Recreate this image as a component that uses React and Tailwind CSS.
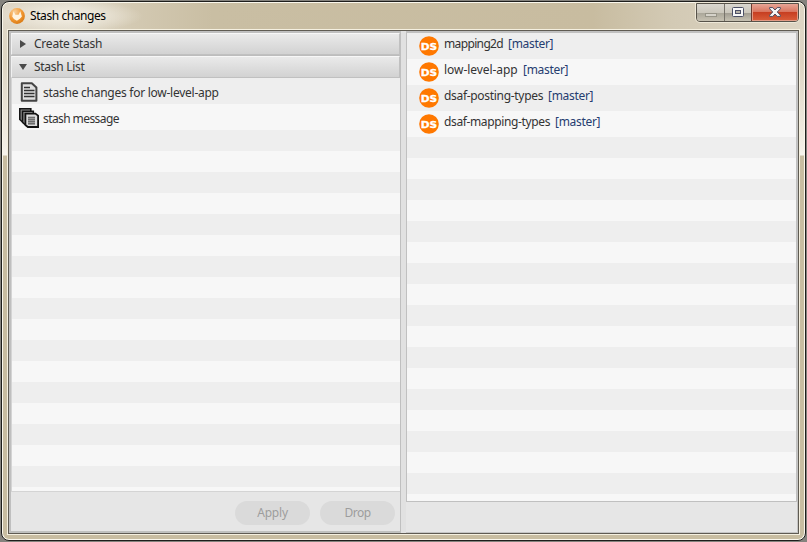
import React from 'react';

const stripes = 'bg-[repeating-linear-gradient(to_bottom,#eeeeee_0px,#eeeeee_21px,#f7f7f7_21px,#f7f7f7_42px)]';

function Logo() {
  return (
    <svg width="18" height="18" viewBox="0 0 18 18">
      <defs>
        <radialGradient id="orb" cx="35%" cy="25%" r="80%">
          <stop offset="0" stopColor="#f9d09a" />
          <stop offset=".55" stopColor="#f39a35" />
          <stop offset="1" stopColor="#d97912" />
        </radialGradient>
      </defs>
      <circle cx="9" cy="9" r="7.9" fill="url(#orb)" />
      <path d="M4.2 9.5 5.6 4.3l1.8 3.4h3.2l1.7-3.4 1.6 5.2-2 2.3-3 2-3-1.8z" fill="#fff4df" />
    </svg>
  );
}

function DocIcon() {
  return (
    <svg width="20" height="20" viewBox="0 0 20 20" className="mt-[2px] shrink-0">
      <path d="M2.8 1.2h10L17.4 5.5V18.7H2.8z" fill="#e0e0e0" stroke="#444" strokeWidth="2" strokeLinejoin="round" />
      <path d="M5 5.5h6M5 8.5h10.5M5 11.5h10.5M5 14.5h10.5" stroke="#333" strokeWidth="1.6" />
    </svg>
  );
}

function StackIcon() {
  return (
    <svg width="20" height="20" viewBox="0 0 20 20" className="mt-[2px] shrink-0">
      <path d="M.8.8h11v12.7H3L.8 11.5z" fill="#8a8a8a" stroke="#151515" strokeWidth="1.6" />
      <path d="M3.6 3.3h10.7v13H5.7l-2.1-2z" fill="#999" stroke="#151515" strokeWidth="1.6" />
      <path d="M6.4 5.6h10l2.7 2V19H8.9l-2.5-2z" fill="#dcdcdc" stroke="#111" strokeWidth="1.8" />
      <path d="M9 8.5h7v8.5H9z" fill="#999" />
      <path d="M9 9.5h7M9 11.5h7M9 13.5h7M9 15.5h7" stroke="#6d6d6d" />
    </svg>
  );
}

function Badge() {
  return (
    <svg width="20" height="20" viewBox="0 0 20 20" className="shrink-0">
      <circle cx="10" cy="10" r="9.8" fill="#ff7800" />
      <g transform="translate(1.8 13.8) scale(1.2 1)">
        <text x="0" y="0" fill="#fff" stroke="#fff" strokeWidth=".3" fontFamily="'DejaVu Sans', sans-serif" fontWeight="bold" fontSize="9.4" textLength="13.7" lengthAdjust="spacingAndGlyphs">DS</text>
      </g>
    </svg>
  );
}

function Label({ text, className = '' }) {
  return <span className={`shrink-0 text-[12px] leading-[18px] whitespace-nowrap ${className}`}>{text}</span>;
}

function Header({ open, label, className }) {
  return (
    <div className="flex h-[22px] items-center border border-[#c0c0c0] border-t-[#f7f7f7] border-l-[#f0f0f0] bg-linear-to-b from-[#eaeaea] to-[#d2d2d2] pl-[6px]">
      <svg width="10" height="10" viewBox="0 0 10 10">
        <path d={open ? 'M1 2h8L5 8z' : 'M2 1v8l6-4z'} fill="#4b4b4b" />
      </svg>
      <Label text={label} className={`ml-[6px] text-[#333333] ${className}`} />
    </div>
  );
}

const repos = [
  ['mapping2d', 'w-[59px] tracking-[-0.64px]'],
  ['low-level-app', 'w-[74px] tracking-[-0.05px]'],
  ['dsaf-posting-types', 'w-[99px] tracking-[-0.31px]'],
  ['dsaf-mapping-types', 'w-[106px] tracking-[-0.37px]'],
];

function Controls() {
  return (
    <div className="mr-[5px] flex h-[19px] w-[103px] overflow-hidden rounded-b-[4px] border border-[#57534a] shadow-[0_0_0_1px_#eee8d8]">
      <div className="flex w-[28px] justify-center border-r border-[#77736b] bg-[linear-gradient(#dad7cf_0%,#cbc7bc_50%,#aaa699_52%,#c6c1b2_100%)] pt-[9px]">
        <div className="h-[4px] w-[12px] border border-[#979488] bg-[#d5d2c9]" />
      </div>
      <div className="flex w-[27px] justify-center border-r border-[#6d3b30] bg-[linear-gradient(#dad7cf_0%,#cbc7bc_50%,#9f9b90_52%,#c6c1b2_100%)] pt-[3px]">
        <svg width="12" height="10" viewBox="0 0 12 10">
          <rect x=".5" y=".5" width="11" height="9" rx="1" fill="#f8f8f8" stroke="#4c5067" />
          <rect x="3.5" y="3.5" width="5" height="3" fill="#b7b3aa" stroke="#4c5067" />
        </svg>
      </div>
      <div className="flex flex-1 justify-center border border-t-0 border-[#e39a84] bg-[linear-gradient(#e7a596_0%,#d97660_48%,#c63d20_50%,#d85b38_100%)] pt-[3px]">
        <svg width="12" height="10" viewBox="0 0 12 10">
          <path d="M.6.6h3.2L6 3 8.2.6h3.2v1.2L8.3 5l3.1 3.2v1.2H8.2L6 7 3.8 9.4H.6V8.2L3.7 5 .6 1.8z" fill="#f7f5f5" stroke="#4c4c60" strokeWidth="1" />
        </svg>
      </div>
    </div>
  );
}

export default function App() {
  return (
    <div className="h-[542px] w-[807px] overflow-hidden bg-[#85837e] p-px font-['Noto_Sans',sans-serif]">
      <div className="h-[540px] w-[805px] rounded-[8px] border border-[#1e1e1c] bg-[#faf7ec] p-px">
        <div className="flex h-[536px] w-[801px] flex-col rounded-[6px] bg-[linear-gradient(to_bottom,#e0d9c8_0px,#ddd5c3_60px,#f3efe6_145px,#f7f4ed_152px,#c8bda1_153px,#c8bda1_100%)]">
          <div className="flex h-[26px] justify-between rounded-t-[6px] bg-[radial-gradient(ellipse_75px_16px_at_65px_13px,#f0ebdf_20%,#f0ebdf00_100%),linear-gradient(to_right,#ded6c6_0px,#e0dacb_70px,#d3c9b2_130px,#c9bea3_210px,#c8bca0_590px,#d3cab5_670px,#ddd5c4_801px)]">
            <div className="flex pt-[4px] pl-[5px]">
              <Logo />
              <Label text="Stash changes" className="ml-[4px] tracking-[-0.42px] text-black" />
            </div>
            <Controls />
          </div>
          <div className="mx-[4px] h-[506px] w-[793px] border border-[#f5f0e0]">
            <div className="flex h-[504px] w-[791px] border border-[#5f5b52] bg-[#e6e6e6]">
              <div className="flex h-[502px] w-[392px] flex-col border-2 border-r border-[#bfbfbf] border-b-[#bfc0be]">
                <Header label="Create Stash" className="tracking-[-0.22px]" />
                <div className="h-px bg-[#bdbdbd]" />
                <Header open label="Stash List" className="tracking-[-0.28px]" />
                <div className="flex h-[414px] flex-col border-b border-l border-[#d4d4d4]">
                  <div className="flex h-[26px] items-center bg-[#eeeeee] pl-[7px]">
                    <DocIcon /><Label text="stashe changes for low-level-app" className="mt-[4px] ml-[4px] tracking-[-0.26px] text-[#333333]" />
                  </div>
                  <div className="flex h-[26px] items-center bg-[#f7f7f7] pl-[7px]">
                    <StackIcon /><Label text="stash message" className="mt-[4px] ml-[4px] tracking-[-0.58px] text-[#333333]" />
                  </div>
                  <div className={`flex-1 ${stripes}`} />
                </div>
                <div className="flex justify-end gap-[10px] pt-[9px] pr-[5px]">
                  <button className="flex h-[24px] w-[75px] items-center justify-center rounded-full bg-[#dadada]"><Label text="Apply" className="tracking-[-0.2px] text-[#9d9d9d]" /></button>
                  <button className="flex h-[24px] w-[75px] items-center justify-center rounded-full bg-[#dadada]"><Label text="Drop" className="tracking-[-0.5px] text-[#9d9d9d]" /></button>
                </div>
              </div>
              <div className="w-[5px] bg-[#e1e1e1]" />
              <div className="flex-1 border-r border-b border-[#c5c5c5]">
                <div className="flex h-[471px] flex-col border border-t-2 border-[#c0c0c0]">
                  {repos.map(([name, fit], i) => (
                    <div key={name} className={`flex h-[26px] shrink-0 pl-[12px] ${i % 2 ? 'bg-[#f7f7f7]' : 'bg-[#eeeeee]'}`}>
                      <div className="pt-[3px]"><Badge /></div>
                      <Label text={name} className={`mt-[2px] ml-[5px] text-[#333333] ${fit}`} />
                      <Label text="[master]" className="mt-[2px] ml-[5px] tracking-[-0.3px] text-[#263d70]" />
                    </div>
                  ))}
                  <div className={`flex-1 ${stripes}`} />
                </div>
              </div>
            </div>
          </div>
        </div>
      </div>
    </div>
  );
}
